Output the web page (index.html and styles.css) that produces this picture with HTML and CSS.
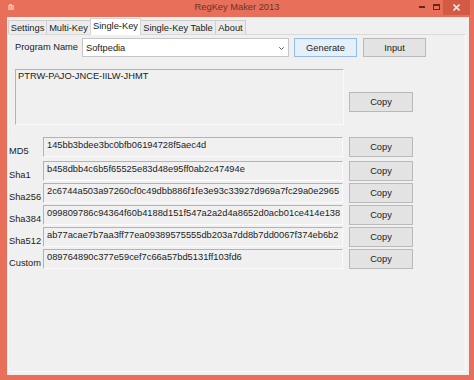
FILE: index.html
```html
<!DOCTYPE html>
<html>
<head>
<meta charset="utf-8">
<title>RegKey Maker 2013</title>
<link rel="stylesheet" href="styles.css">
</head>
<body>
<div class="window">
  <div class="titlebar">
    <div class="tb-left">
      <svg class="app-icon" width="7" height="7" viewBox="0 0 7 7"><rect x="0" y="1" width="6" height="5" fill="#f6c9a8" opacity="0.7"/><rect x="1" y="0" width="3" height="2" fill="#f8dcc0" opacity="0.7"/></svg>
    </div>
    <div class="title">RegKey Maker 2013</div>
    <div class="tb-right">
      <span class="wbtn"><svg width="6" height="2" viewBox="0 0 6 2"><rect width="6" height="2" fill="#5b2b22"/></svg></span>
      <span class="wbtn"><svg width="7" height="6" viewBox="0 0 7 6"><rect x="0.5" y="0.5" width="6" height="5" fill="none" stroke="#5b2b22"/><rect x="0" y="0" width="7" height="2" fill="#5b2b22"/></svg></span>
      <span class="wbtn close"><svg width="7" height="7" viewBox="0 0 7 7"><path d="M0.5 0.5L6.5 6.5M6.5 0.5L0.5 6.5" stroke="#fbe3dd" stroke-width="1.6"/></svg></span>
    </div>
  </div>
  <div class="client">
    <div class="tabs">
      <div class="tab w-settings">Settings</div>
      <div class="tab w-multi">Multi-Key</div>
      <div class="tab tab-active w-single">Single-Key</div>
      <div class="tab w-table">Single-Key Table</div>
      <div class="tab w-about">About</div>
    </div>
    <div class="panel">
      <div class="top-row">
        <div class="prog-label">Program Name</div>
        <div class="combo">
          <span class="combo-text">Softpedia</span>
          <svg class="chev" width="5" height="3" viewBox="0 0 5 3"><path d="M0.3 0.3L2.5 2.5L4.7 0.3" fill="none" stroke="#555" stroke-width="1"/></svg>
        </div>
        <div class="btn btn-default gen">Generate</div>
        <div class="btn input">Input</div>
      </div>
      <div class="key-row">
        <div class="textbox key-box">PTRW-PAJO-JNCE-IILW-JHMT</div>
        <div class="btn copy key-copy">Copy</div>
      </div>
      <div class="hashes">
        <div class="hash-row first">
          <div class="hash-label">MD5</div>
          <div class="textbox hash-box">145bb3bdee3bc0bfb06194728f5aec4d</div>
          <div class="btn copy">Copy</div>
        </div>
        <div class="hash-row">
          <div class="hash-label">Sha1</div>
          <div class="textbox hash-box">b458dbb4c6b5f65525e83d48e95ff0ab2c47494e</div>
          <div class="btn copy">Copy</div>
        </div>
        <div class="hash-row">
          <div class="hash-label">Sha256</div>
          <div class="textbox hash-box">2c6744a503a97260cf0c49dbb886f1fe3e93c33927d969a7fc29a0e2965</div>
          <div class="btn copy">Copy</div>
        </div>
        <div class="hash-row">
          <div class="hash-label">Sha384</div>
          <div class="textbox hash-box">099809786c94364f60b4188d151f547a2a2d4a8652d0acb01ce414e138</div>
          <div class="btn copy">Copy</div>
        </div>
        <div class="hash-row">
          <div class="hash-label">Sha512</div>
          <div class="textbox hash-box">ab77acae7b7aa3ff77ea09389575555db203a7dd8b7dd0067f374eb6b2</div>
          <div class="btn copy">Copy</div>
        </div>
        <div class="hash-row">
          <div class="hash-label">Custom</div>
          <div class="textbox hash-box">089764890c377e59cef7c66a57bd5131ff103fd6</div>
          <div class="btn copy">Copy</div>
        </div>
      </div>
    </div>
  </div>
</div>
</body>
</html>
```
FILE: styles.css
```css
* { box-sizing: border-box; }
html, body { margin: 0; padding: 0; }
body {
  width: 474px;
  height: 380px;
  overflow: hidden;
  font-family: "Liberation Sans", Arial, sans-serif;
  font-size: 9.3px;
  color: #1b1b1b;
}
.window {
  width: 474px;
  height: 380px;
  background: #e8705a;
  display: flex;
  flex-direction: column;
}
.titlebar {
  height: 17px;
  display: grid;
  grid-template-columns: 1fr auto 1fr;
  align-items: start;
}
.tb-left {
  padding: 4px 0 0 8px;
  display: flex;
}
.title {
  line-height: 15px;
  font-size: 9.3px;
  color: #6a3328;
}
.tb-right {
  display: flex;
  justify-content: flex-end;
  padding-right: 4px;
}
.wbtn {
  width: 14px;
  height: 15px;
  display: flex;
  align-items: center;
  justify-content: center;
  padding-bottom: 2px;
}
.wbtn.close {
  width: 27px;
  background: #d35a45;
  padding-bottom: 1px;
}
.client {
  flex: 1;
  margin: 0 5px 5px 7px;
  background: #f0f0f0;
  padding: 1px 3px 3px 1px;
  display: flex;
  flex-direction: column;
}
.tabs {
  height: 16px;
  display: flex;
  align-items: flex-end;
}
.tab {
  height: 14px;
  border: 1px solid #cfcfcf;
  border-bottom: none;
  background: #ececec;
  display: flex;
  align-items: center;
  justify-content: center;
  line-height: 12px;
  white-space: nowrap;
  margin-right: -1px;
}
.w-settings { width: 39px; }
.w-multi { width: 45px; }
.w-single { width: 51px; }
.w-table { width: 76px; }
.w-about { width: 31px; }
.tab-active {
  height: 17px;
  margin-bottom: -1px;
  background: #ffffff;
  padding-bottom: 3px;
  position: relative;
  z-index: 1;
  border-color: #d4d4d4;
}
.panel {
  flex: 1;
  border: 1px solid #d9d9d9;
  border-top-color: #dadada;
  border-left-color: #fbfbfb;
  border-bottom-color: #fbfbfb;
  border-right-color: #fbfbfb;
  background: #f0f0f0;
  padding-top: 3px;
  display: flex;
  flex-direction: column;
}
.top-row {
  height: 19px;
  display: flex;
  align-items: stretch;
  margin-left: 6px;
}
.prog-label {
  width: 67px;
  line-height: 19px;
}
.combo {
  width: 207px;
  background: #ffffff;
  border: 1px solid #c6c6c6;
  display: flex;
  align-items: center;
  justify-content: space-between;
  padding: 0 4px 0 3px;
}
.combo-text { line-height: 12px; }
.chev { margin-top: 1px; }
.btn {
  background: #e3e3e3;
  border: 1px solid #b9b9b9;
  display: flex;
  align-items: center;
  justify-content: center;
  line-height: 12px;
  white-space: nowrap;
}
.btn-default {
  background: #e6f0fa;
  border-color: #93bde8;
}
.gen { width: 63px; margin-left: 5px; }
.input { width: 63px; margin-left: 6px; }
.textbox {
  background: #f0f0f0;
  border: 1px solid #fbfbfb;
  border-top-color: #b3b3b3;
  border-left-color: #b3b3b3;
  white-space: nowrap;
  overflow: hidden;
  line-height: 12px;
}
.key-row {
  display: flex;
  margin-top: 12px;
  margin-left: 6px;
  height: 56px;
}
.key-box {
  width: 329px;
  padding: 0 0 0 2px;
}
.copy {
  width: 64px;
  height: 20px;
  margin-left: 6px;
}
.key-copy {
  margin-top: 23px;
  margin-left: 5px;
}
.hashes {
  margin-top: 12px;
  display: flex;
  flex-direction: column;
  gap: 2px;
}
.hash-row {
  display: flex;
  height: 20px;
}
.hash-row.first { margin-bottom: 2px; }
.hash-label {
  width: 34px;
  padding-top: 8px;
  line-height: 12px;
  white-space: nowrap;
}
.hash-box {
  width: 300px;
  padding: 1px 0 0 3px;
}
```
